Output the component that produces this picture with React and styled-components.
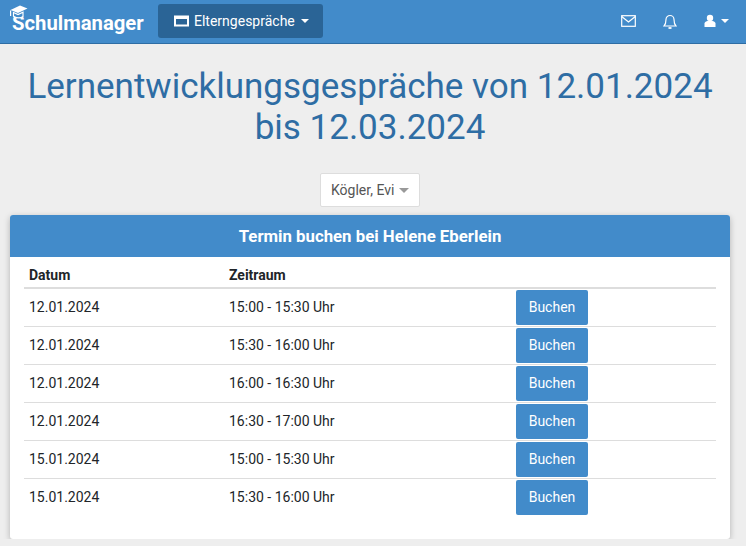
import React from "react";
import styled, { createGlobalStyle } from "styled-components";

const GlobalStyle = createGlobalStyle`
  html, body {
    margin: 0;
    padding: 0;
    background: #eeeeee;
    font-family: Roboto, "Liberation Sans", sans-serif;
    font-size: 14px;
    color: #212529;
  }
  * { box-sizing: border-box; }
`;

/* NAVBAR */
const Navbar = styled.nav`
  height: 44px;
  background: #428bca;
  border-bottom: 1px solid #2e6da4;
  display: flex;
  align-items: center;
  padding: 0 17px 1px 12px;
`;

const Brand = styled.div`
  position: relative;
  width: 146px;
  color: #fff;
  font-size: 20.3px;
  font-weight: 700;
  line-height: 24px;
  padding-top: 4px;
`;

const BrandHat = styled.svg`
  position: absolute;
  left: -3px;
  top: -2px;
`;

const MenuButton = styled.button`
  height: 34px;
  width: 165px;
  background: #2a6496;
  border: 0;
  border-radius: 3px;
  color: #fff;
  font: 400 14px Roboto, sans-serif;
  display: flex;
  align-items: center;
  padding: 0 0 0 16px;
  gap: 5px;
`;

const Caret = styled.span`
  display: inline-block;
  width: 0;
  height: 0;
  border-top: ${(p) => p.$size || 4}px solid ${(p) => p.$color || "#fff"};
  border-left: ${(p) => p.$size || 4}px solid transparent;
  border-right: ${(p) => p.$size || 4}px solid transparent;
  margin-left: ${(p) => p.$gap || 6}px;
`;

const NavIcons = styled.div`
  margin-left: auto;
  display: flex;
  align-items: center;
`;

const IconLink = styled.span`
  display: flex;
  align-items: center;
  color: #fff;
  margin-left: ${(p) => p.$gap || 0}px;
`;

/* PAGE */
const Main = styled.main`
  margin: 0 16px 0 10px;
`;

const Title = styled.h1`
  margin: 0;
  padding: 22px 0 0;
  text-align: center;
  color: #2e6da4;
  font-size: 35px;
  font-weight: 400;
  line-height: 41px;
`;

const PickerRow = styled.div`
  display: flex;
  justify-content: center;
  margin-top: 25px;
`;

const Picker = styled.div`
  width: 100px;
  height: 34px;
  background: #fff;
  border: 1px solid #dddddd;
  border-radius: 2px;
  color: #555;
  font-size: 14px;
  display: flex;
  align-items: center;
  padding-left: 10px;
`;

/* CARD */
const Card = styled.section`
  margin-top: 8px;
  background: #fff;
  border-radius: 3px;
  box-shadow: 0 2px 6px rgba(0, 0, 0, 0.25);
  padding-bottom: 23px;
`;

const CardHeader = styled.header`
  height: 42px;
  background: #428bca;
  border-radius: 3px 3px 0 0;
  color: #fff;
  font-size: 16.8px;
  font-weight: 700;
  display: flex;
  align-items: center;
  justify-content: center;
`;

const Table = styled.table`
  width: 692px;
  margin-left: 14px;
  border-collapse: collapse;
  table-layout: fixed;
`;

const Th = styled.th`
  height: 31px;
  padding: 5px 5px 0;
  text-align: left;
  font-size: 14px;
  font-weight: 700;
  border-bottom: 2px solid #dddddd;
  width: ${(p) => p.$width || "auto"};
`;

const Td = styled.td`
  height: 38px;
  padding: 0 5px;
  font-size: 14px;
  border-bottom: ${(p) => (p.$last ? "0" : "1px solid #dddddd")};
`;

const BookButton = styled.button`
  display: block;
  width: 72px;
  height: 35px;
  background: #428bca;
  border: 0;
  border-radius: 2px;
  color: #fff;
  font: 400 14px Roboto, sans-serif;
  padding: 0;
`;

const slots = [
  ["12.01.2024", "15:00 - 15:30 Uhr"],
  ["12.01.2024", "15:30 - 16:00 Uhr"],
  ["12.01.2024", "16:00 - 16:30 Uhr"],
  ["12.01.2024", "16:30 - 17:00 Uhr"],
  ["15.01.2024", "15:00 - 15:30 Uhr"],
  ["15.01.2024", "15:30 - 16:00 Uhr"],
];

export default function App() {
  return (
    <>
      <GlobalStyle />
      <Navbar>
        <Brand>
          <BrandHat width="19" height="15" viewBox="0 0 19 15">
            <path d="M11 0.500 18.500 3.500 9 8 1.500 5z" fill="#fff" />
            <path
              d="M4.500 7.500 9 9.500l5-2.300v4.300c-2.500 2-6.500 1.500-9.500-.3z"
              fill="#428bca"
              stroke="#fff"
              strokeWidth="1.200"
            />
            <path d="M1 5.500h1.200v5.500H1z" fill="#fff" />
          </BrandHat>
          Schulmanager
        </Brand>
        <MenuButton>
          <svg width="15" height="12" viewBox="0 0 15 12">
            <rect x="1" y="1.500" width="13" height="9" fill="none" stroke="#fff" strokeWidth="2" />
            <rect x="1" y="1" width="13" height="3" fill="#fff" />
          </svg>
          Elterngespräche
          <Caret $gap={1} />
        </MenuButton>
        <NavIcons>
          <IconLink>
            <svg width="15" height="12" viewBox="0 0 15 12" fill="none" stroke="#fff" strokeWidth="1.200">
              <rect x="0.700" y="0.700" width="13.600" height="10.600" />
              <path d="M0.700 1.500l6.800 5.500 6.800-5.500" />
            </svg>
          </IconLink>
          <IconLink $gap={27}>
            <svg width="14" height="15" viewBox="0 0 14 15" fill="none" stroke="#fff" strokeWidth="1.200">
              <path d="M1 12c1.500-1.500 2-3 2-6.500a4 4 0 0 1 8 0c0 3.500.5 5 2 6.500z" />
              <path d="M5.500 14h3" strokeWidth="1.800" />
            </svg>
          </IconLink>
          <IconLink $gap={27}>
            <svg width="12" height="14" viewBox="0 0 12 14" fill="#fff">
              <circle cx="6" cy="4" r="3.200" />
              <path d="M0.500 13V9.500C.5 8 2.500 7 3.500 7h5c1 0 3 1 3 2.500V13z" />
            </svg>
            <Caret $gap={5} />
          </IconLink>
        </NavIcons>
      </Navbar>

      <Main>
        <Title>Lernentwicklungsgespräche von 12.01.2024 bis 12.03.2024</Title>

        <PickerRow>
          <Picker>
            Kögler, Evi
            <Caret $color="#999" $size={5} $gap={5} />
          </Picker>
        </PickerRow>

        <Card>
          <CardHeader>Termin buchen bei Helene Eberlein</CardHeader>
          <Table>
            <thead>
              <tr>
                <Th $width="200px">Datum</Th>
                <Th $width="287px">Zeitraum</Th>
                <Th />
              </tr>
            </thead>
            <tbody>
              {slots.map(([date, time], i) => (
                <tr key={i}>
                  <Td $last={i === slots.length - 1}>{date}</Td>
                  <Td $last={i === slots.length - 1}>{time}</Td>
                  <Td $last={i === slots.length - 1}>
                    <BookButton>Buchen</BookButton>
                  </Td>
                </tr>
              ))}
            </tbody>
          </Table>
        </Card>
      </Main>
    </>
  );
}
